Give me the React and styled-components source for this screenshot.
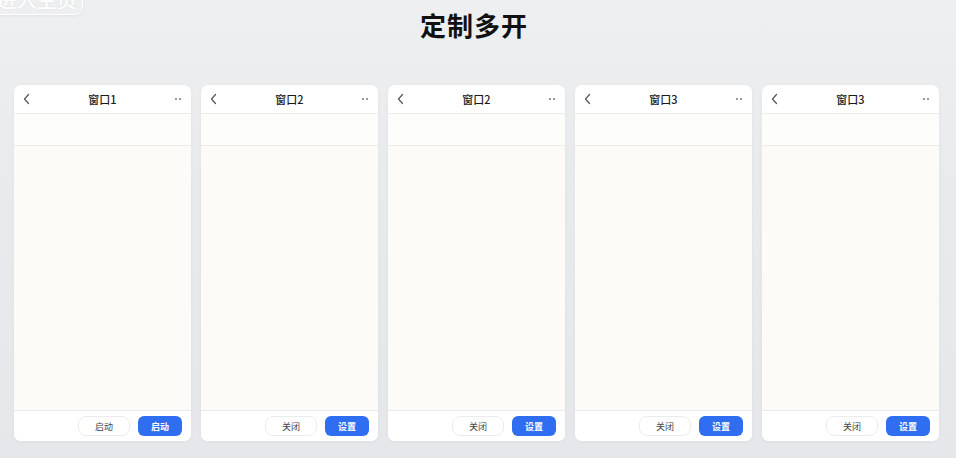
import React from "react";
import styled, { createGlobalStyle } from "styled-components";

const GlobalStyle = createGlobalStyle`
  html, body {
    margin: 0;
    padding: 0;
  }
  body {
    width: 956px;
    height: 458px;
    overflow: hidden;
    background: linear-gradient(180deg, #eeeff1 0%, #e9eaec 40%, #e6e7ea 100%);
    font-family: "Noto Sans CJK SC", "Noto Sans", sans-serif;
  }
`;

const windows = [
  { title: "窗口1", left: "启动", right: "启动" },
  { title: "窗口2", left: "关闭", right: "设置" },
  { title: "窗口2", left: "关闭", right: "设置" },
  { title: "窗口3", left: "关闭", right: "设置" },
  { title: "窗口3", left: "关闭", right: "设置" },
];

const App = () => {
  return (
    <>
      <GlobalStyle />
      <Page>
        <TopBar>
          <HomeButton>进入主页</HomeButton>
          <Title>定制多开</Title>
          <span />
        </TopBar>
        <Row>
          {windows.map((w, i) => (
            <Card key={i}>
              <CardHeader>
                <Chevron viewBox="0 0 10 12">
                  <path d="M6.5 1.5 L2.5 6 L6.5 10.5" fill="none" stroke="#555" strokeWidth="1.2" strokeLinecap="round" strokeLinejoin="round" />
                </Chevron>
                <CardTitle>{w.title}</CardTitle>
                <Dots>
                  <i />
                  <i />
                </Dots>
              </CardHeader>
              <Band />
              <Content />
              <Footer>
                <GhostButton>{w.left}</GhostButton>
                <PrimaryButton>{w.right}</PrimaryButton>
              </Footer>
            </Card>
          ))}
        </Row>
      </Page>
    </>
  );
};

export default App;

const Page = styled.div`
  display: flex;
  flex-direction: column;
  height: 458px;
`;

const TopBar = styled.div`
  display: grid;
  grid-template-columns: 1fr auto 1fr;
  align-items: start;
  height: 85px;
`;

const HomeButton = styled.div`
  justify-self: start;
  margin-top: -18px;
  margin-left: -10px;
  width: 93px;
  height: 33px;
  border: 1.5px solid #ffffff;
  border-radius: 8px;
  box-sizing: border-box;
  display: flex;
  align-items: center;
  justify-content: center;
  padding-top: 2px;
  color: #ffffff;
  font-size: 20px;
  font-weight: 500;
  text-shadow: 0 0 2px rgba(0, 0, 0, 0.08);
  box-shadow: 0 1px 3px rgba(0, 0, 0, 0.06);
`;

const Title = styled.div`
  margin-top: 6px;
  margin-left: -8px;
  font-size: 26px;
  font-weight: 700;
  color: #111111;
  letter-spacing: 1px;
`;

const Row = styled.div`
  display: flex;
  gap: 10px;
  padding-left: 14px;
`;

const Card = styled.div`
  width: 177px;
  height: 356px;
  background: #ffffff;
  border-radius: 7px;
  overflow: hidden;
  display: flex;
  flex-direction: column;
  box-shadow: 0 1px 4px rgba(0, 0, 0, 0.04);
`;

const CardHeader = styled.div`
  height: 28px;
  display: grid;
  grid-template-columns: 30px 1fr 30px;
  align-items: center;
  border-bottom: 1px solid #ececec;
`;

const Chevron = styled.svg`
  width: 10px;
  height: 12px;
  margin-left: 8px;
`;

const CardTitle = styled.div`
  text-align: center;
  font-size: 11px;
  font-weight: 500;
  color: #1a1a1a;
`;

const Dots = styled.div`
  display: flex;
  gap: 2px;
  justify-content: flex-end;
  padding-right: 10px;
  i {
    width: 2px;
    height: 2px;
    border-radius: 50%;
    background: #777;
  }
`;

const Band = styled.div`
  height: 31px;
  background: #fdfdfc;
  border-bottom: 1px solid #ebebe9;
`;

const Content = styled.div`
  flex: 1;
  background: #fcfbf8;
  border-bottom: 1px solid #e9e9e7;
`;

const Footer = styled.div`
  height: 30px;
  display: flex;
  align-items: center;
  justify-content: flex-end;
  gap: 8px;
  padding-right: 9px;
  background: #ffffff;
`;

const GhostButton = styled.div`
  width: 52px;
  height: 20px;
  box-sizing: border-box;
  border: 1px solid #ececec;
  border-radius: 8px;
  display: flex;
  align-items: center;
  justify-content: center;
  font-size: 9px;
  color: #444;
  background: #fff;
`;

const PrimaryButton = styled.div`
  width: 44px;
  height: 20px;
  border-radius: 6px;
  display: flex;
  align-items: center;
  justify-content: center;
  font-size: 9px;
  font-weight: 700;
  color: #ffffff;
  background: #2f6ef0;
`;
